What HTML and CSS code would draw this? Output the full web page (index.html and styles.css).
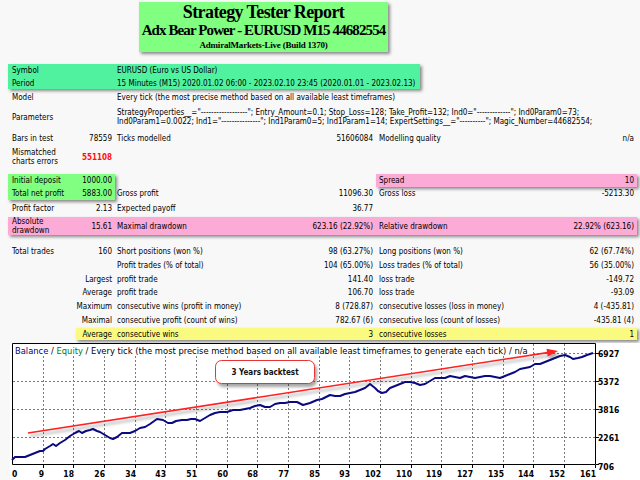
FILE: index.html
```html
<!DOCTYPE html>
<html>
<head>
<meta charset="utf-8">
<title>Strategy Tester Report</title>
<link rel="stylesheet" href="styles.css">
</head>
<body>
<header class="title-box">
  <div class="t1">Strategy Tester Report</div>
  <div class="t2">Adx Bear Power - EURUSD M15 44682554</div>
  <div class="t3">AdmiralMarkets-Live (Build 1370)</div>
</header>

<main class="report">
  <section class="band mint">
    <div class="pair h13"><span class="a">Symbol</span><span class="c3">EURUSD (Euro vs US Dollar)</span></div>
    <div class="pair h12"><span class="a">Period</span><span class="c3">15 Minutes (M15) 2020.01.02 06:00 - 2023.02.10 23:45 (2020.01.01 - 2023.02.13)</span></div>
  </section>

  <div class="row h17">
    <div class="a">Model</div>
    <div class="c3 wide">Every tick (the most precise method based on all available least timeframes)</div>
  </div>
  <div class="row h22">
    <div class="a">Parameters</div>
    <div class="c3 wide lines">StrategyProperties__="------------------"; Entry_Amount=0.1; Stop_Loss=128; Take_Profit=132; Ind0="-------------"; Ind0Param0=73;<br>Ind0Param1=0.0022; Ind1="---------------"; Ind1Param0=5; Ind1Param1=14; ExpertSettings__="----------"; Magic_Number=44682554;</div>
  </div>
  <div class="row h20">
    <div class="a">Bars in test</div><div class="b">78559</div>
    <div class="c3">Ticks modelled</div><div class="d">51606084</div>
    <div class="e">Modelling quality</div><div class="f">n/a</div>
  </div>
  <div class="row h18">
    <div class="a lines">Mismatched charts errors</div><div class="b red">551108</div>
  </div>

  <section class="money">
    <div class="deposit">
      <div class="a">Initial deposit</div><div class="b">1000.00</div>
      <div class="a">Total net profit</div><div class="b">5883.00</div>
    </div>
    <div class="money-right">
      <div class="skip"></div>
      <div class="spread">
        <span class="e">Spread</span><span class="f">10</span>
      </div>
      <div class="c3">Gross profit</div><div class="d">11096.30</div>
      <div class="e">Gross loss</div><div class="f">-5213.30</div>
    </div>
  </section>

  <div class="row h17">
    <div class="a">Profit factor</div><div class="b">2.13</div>
    <div class="c3">Expected payoff</div><div class="d">36.77</div>
  </div>
  <div class="row h18 pink">
    <div class="a lines">Absolute drawdown</div><div class="b">15.61</div>
    <div class="c3">Maximal drawdown</div><div class="d">623.16 (22.92%)</div>
    <div class="e">Relative drawdown</div><div class="f">22.92% (623.16)</div>
  </div>

  <div class="row h14 gap">
    <div class="a">Total trades</div><div class="b">160</div>
    <div class="c3">Short positions (won %)</div><div class="d">98 (63.27%)</div>
    <div class="e">Long positions (won %)</div><div class="f">62 (67.74%)</div>
  </div>
  <div class="row h14">
    <div class="ab"></div>
    <div class="c3">Profit trades (% of total)</div><div class="d">104 (65.00%)</div>
    <div class="e">Loss trades (% of total)</div><div class="f">56 (35.00%)</div>
  </div>
  <div class="row h14">
    <div class="ab">Largest</div>
    <div class="c3">profit trade</div><div class="d">141.40</div>
    <div class="e">loss trade</div><div class="f">-149.72</div>
  </div>
  <div class="row h13">
    <div class="ab">Average</div>
    <div class="c3">profit trade</div><div class="d">106.70</div>
    <div class="e">loss trade</div><div class="f">-93.09</div>
  </div>
  <div class="row h14">
    <div class="ab">Maximum</div>
    <div class="c3">consecutive wins (profit in money)</div><div class="d">8 (728.87)</div>
    <div class="e">consecutive losses (loss in money)</div><div class="f">4 (-435.81)</div>
  </div>
  <div class="row h14">
    <div class="ab">Maximal</div>
    <div class="c3">consecutive profit (count of wins)</div><div class="d">782.67 (6)</div>
    <div class="e">consecutive loss (count of losses)</div><div class="f">-435.81 (4)</div>
  </div>
  <div class="row yellow-row">
    <div class="yellow">
      <div class="b">Average</div>
      <div class="c3">consecutive wins</div><div class="d">3</div>
      <div class="e">consecutive losses</div><div class="f">1</div>
    </div>
  </div>
</main>

<figure class="chart">
  <svg width="630" height="137" viewBox="10 343 630 137" xmlns="http://www.w3.org/2000/svg">
    <defs>
      <filter id="shadow" x="-10%" y="-60%" width="125%" height="260%">
        <feDropShadow dx="2" dy="3" stdDeviation="1.5" flood-color="#000" flood-opacity="0.35"/>
      </filter>
    </defs>
    <rect x="10" y="343" width="630" height="137" fill="#ffffff"/>
    <g stroke="#7a7a7a" stroke-width="1" stroke-dasharray="2 2" fill="none">
      <path d="M43.5 344V464M73.5 344V464M104.5 344V464M135.5 344V464M165.5 344V464M196.5 344V464M227.5 344V464M257.5 344V464M288.5 344V464M319.5 344V464M349.5 344V464M380.5 344V464M411.5 344V464M441.5 344V464M472.5 344V464M503.5 344V464M533.5 344V464M564.5 344V464"/>
      <path d="M13 353.5H595M13 381.5H595M13 409.5H595M13 437.5H595"/>
    </g>
    <rect x="13" y="344" width="520" height="12" fill="#ffffff"/>
    <g stroke="#000" stroke-width="1" fill="none">
      <path d="M12.5 343.5H595.5V464.5H12.5Z"/>
      <path d="M43.5 465V468M73.5 465V468M104.5 465V468M135.5 465V468M165.5 465V468M196.5 465V468M227.5 465V468M257.5 465V468M288.5 465V468M319.5 465V468M349.5 465V468M380.5 465V468M411.5 465V468M441.5 465V468M472.5 465V468M503.5 465V468M533.5 465V468M564.5 465V468M595.5 465V468"/>
      <path d="M596 353.5H599M596 381.5H599M596 409.5H599M596 437.5H599M596 464.5H599"/>
    </g>
    <text class="chart-title" x="15" y="353.5"><tspan fill="#000080">Balance</tspan> / <tspan fill="#008000">Equity</tspan> / Every tick (the most precise method based on all available least timeframes to generate each tick) / n/a</text>
    <polyline fill="none" stroke="#0a0a80" stroke-width="2" stroke-linejoin="round" points="12,460 15,457 25,457 30,455 35,453 40,451 43,451 45,449 50,446 53,444 56,446 60,443 65,440 70,436 75,433 79,431 82,433 86,431 90,430 93,429 97,431 100,432 105,435 110,438 113,439 117,437 122,433 130,433 135,431 140,428 145,427 150,424 157,419 163,420 168,423 172,423 176,421 182,420 187,420 191,419 195,419 200,421 205,418 210,415 215,413 220,412 227,412 233,410 240,410 245,409 250,408 255,406 260,405 265,407 270,407 275,404 280,403 285,403 290,402 297,402 303,405 310,403 317,400 322,399 330,395 335,396 340,396 345,394 350,393 355,392 360,390 365,388 370,384 375,388 378,391 382,393 386,392 390,388 395,386 400,384 405,382 410,382 415,383 420,385 425,384 430,381 435,378 440,378 445,378 450,376 455,377 460,378 465,376 470,377 475,378 480,377 485,376 490,376 495,377 500,378 505,376 510,374 515,372 520,369 525,368 530,367 535,364 540,364 545,362 550,360 555,358 560,356 565,355 570,357 573,359 578,358 582,357 587,355 593,353"/>
    <g filter="url(#shadow)">
      <line x1="28" y1="433" x2="549" y2="352.4" stroke="#ff2020" stroke-width="1.6"/>
      <polygon points="558,351 547.7,356.6 546.5,348.7" fill="#ff2020"/>
      <rect x="215.5" y="360.5" width="99" height="23" rx="6" fill="#ffffff" stroke="#e53535" stroke-width="1"/>
    </g>
    <text class="callout" x="265" y="375" text-anchor="middle">3 Years backtest</text>
    <g class="axis-y">
      <text x="598" y="357">6927</text>
      <text x="598" y="385">5372</text>
      <text x="598" y="413">3816</text>
      <text x="598" y="441">2261</text>
      <text x="598" y="470">706</text>
    </g>
    <g class="axis-x" text-anchor="end">
      <text x="12" y="477" text-anchor="start">0</text>
      <text x="44" y="477">9</text>
      <text x="74" y="477">18</text>
      <text x="105" y="477">26</text>
      <text x="136" y="477">34</text>
      <text x="166" y="477">43</text>
      <text x="197" y="477">51</text>
      <text x="228" y="477">60</text>
      <text x="258" y="477">68</text>
      <text x="289" y="477">77</text>
      <text x="320" y="477">85</text>
      <text x="350" y="477">93</text>
      <text x="381" y="477">102</text>
      <text x="412" y="477">110</text>
      <text x="442" y="477">119</text>
      <text x="473" y="477">127</text>
      <text x="504" y="477">135</text>
      <text x="534" y="477">144</text>
      <text x="565" y="477">152</text>
      <text x="596" y="477">161</text>
    </g>
  </svg>
</figure>
</body>
</html>
```

FILE: styles.css
```css
html, body {
  margin: 0;
  padding: 0;
}

body {
  background: #f8f8f8;
  color: #000;
  font-family: "DejaVu Sans Condensed", "DejaVu Sans", sans-serif;
  font-size: 8px;
  width: 640px;
  height: 480px;
  overflow: hidden;
}

/* ---------- title ---------- */
.title-box {
  margin: 2px 0 0 139px;
  width: 249px;
  height: 50px;
  background: #80ff80;
  box-shadow: 2px 2px 3px rgba(0, 0, 0, 0.45);
  font-family: "Liberation Serif", "Times New Roman", serif;
  font-weight: bold;
  color: #000;
  text-align: center;
  display: flex;
  flex-direction: column;
  align-items: center;
}
.t1 {
  font-size: 18px;
  letter-spacing: -0.6px;
  line-height: 20px;
}
.t2 {
  font-size: 15px;
  letter-spacing: -0.9px;
  line-height: 17px;
}
.t3 {
  font-size: 9px;
  letter-spacing: -0.2px;
  line-height: 12px;
}

/* ---------- report table ---------- */
.report {
  margin: 12px 0 0 8px;
  width: 629px;
}

.row {
  display: grid;
  grid-template-columns: 68px 39px 135px 126px 144px 117px;
  align-items: center;
}

.h12 { height: 12px; }
.h13 { height: 13px; }
.h14 { height: 14px; }
.h17 { height: 17px; }
.h18 { height: 18px; }
.h20 { height: 20px; }
.h22 { height: 22px; }

.a  { padding-left: 4px; }
.b  { text-align: right; padding-right: 3px; }
.c3 { padding-left: 2px; }
.d  { text-align: right; padding-right: 3px; }
.e  { padding-left: 3px; }
.f  { text-align: right; padding-right: 3px; }
.ab { grid-column: 1 / 3; text-align: right; padding-right: 3px; }
.wide { grid-column: 3 / 7; }

.lines { line-height: 9px; }
.row > div { white-space: nowrap; }
.row > .lines { white-space: normal; }

.red {
  color: #ff1010;
  font-weight: bold;
}

/* symbol / period band */
.band {
  width: 412px;
  box-shadow: 2px 2px 3px rgba(0, 0, 0, 0.45);
}
.mint { background: #50f2a0; }
.pair {
  display: grid;
  grid-template-columns: 107px 1fr;
  align-items: center;
  white-space: nowrap;
}

/* deposit / spread block */
.money {
  display: flex;
  margin-top: 8px;
  height: 26px;
}
.deposit {
  display: grid;
  grid-template-columns: 68px 39px;
  grid-template-rows: 13px 13px;
  align-items: center;
  background: #80ff80;
  box-shadow: 2px 2px 3px rgba(0, 0, 0, 0.45);
  white-space: nowrap;
}
.money-right {
  display: grid;
  grid-template-columns: 135px 126px 144px 117px;
  grid-template-rows: 13px 13px;
  align-items: center;
  white-space: nowrap;
}
.skip { grid-column: span 2; }
.spread {
  grid-column: span 2;
  display: flex;
  justify-content: space-between;
  align-items: center;
  height: 13px;
  background: #fcaad6;
  box-shadow: 2px 2px 3px rgba(0, 0, 0, 0.45);
}

.pink {
  background: #fcaad6;
  box-shadow: 2px 2px 3px rgba(0, 0, 0, 0.45);
}

.gap { margin-top: 9px; }

.yellow-row {
  margin-top: 1px;
  height: 12px;
}
.yellow {
  grid-column: 2 / 7;
  display: grid;
  grid-template-columns: 39px 135px 126px 144px 117px;
  align-items: center;
  height: 12px;
  background: #fafa80;
  box-shadow: 2px 2px 3px rgba(0, 0, 0, 0.45);
  white-space: nowrap;
}

/* ---------- chart ---------- */
.chart {
  margin: 3px 0 0 10px;
  width: 630px;
  height: 137px;
}
.chart svg {
  display: block;
}
.chart-title {
  font-family: "DejaVu Sans Condensed", "DejaVu Sans", sans-serif;
  font-size: 9.3px;
  fill: #000;
}
.callout {
  font-family: "DejaVu Sans Condensed", "DejaVu Sans", sans-serif;
  font-size: 8px;
  font-weight: bold;
  fill: #111;
}
.axis-y text,
.axis-x text {
  font-family: "DejaVu Sans Condensed", "DejaVu Sans", sans-serif;
  font-weight: bold;
  font-size: 8.5px;
  fill: #000;
}
```
